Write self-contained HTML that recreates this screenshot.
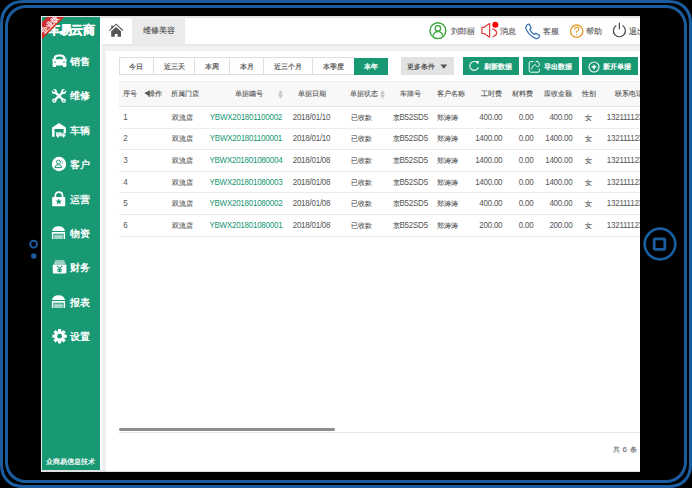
<!DOCTYPE html>
<html><head><meta charset="utf-8">
<style>
*{margin:0;padding:0;box-sizing:border-box;}
html,body{width:692px;height:488px;overflow:hidden;background:#000;font-family:"Liberation Sans",sans-serif;}
.a{position:absolute;}
#frame{position:absolute;left:0;top:0;}
#screen{position:absolute;left:41px;top:16px;width:599px;height:455.5px;background:#fff;overflow:hidden;}
#side{position:absolute;left:1px;top:1px;width:58.3px;height:452.6px;background:#189873;}
.mi{position:absolute;left:28px;color:#fff;font-size:10px;line-height:12px;font-weight:bold;white-space:nowrap;}
.t{position:absolute;white-space:nowrap;font-size:8px;line-height:10px;color:#555;letter-spacing:-0.25px;-webkit-text-stroke:0.1px currentColor;}
.c{font-size:7.3px;letter-spacing:0;-webkit-text-stroke:0.1px currentColor;}
.l{display:inline-block;transform:scaleY(1.16);-webkit-text-stroke:0px currentColor;}
</style></head><body>
<svg id="frame" width="692" height="488" viewBox="0 0 692 488">
  <path d="M23.5,1.5 H668.5 C682.14,1.5 690.5,9.86 690.5,23.5 V464.5 C690.5,478.14 682.14,486.5 668.5,486.5 H23.5 C9.86,486.5 1.5,478.14 1.5,464.5 V23.5 C1.5,9.86 9.86,1.5 23.5,1.5 Z" fill="none" stroke="#1b5c9e" stroke-width="3"/>
  <path d="M26.5,6.5 H665.5 C677.10,6.5 685.5,14.90 685.5,26.5 V461.5 C685.5,473.10 677.10,481.5 665.5,481.5 H26.5 C14.90,481.5 6.5,473.10 6.5,461.5 V26.5 C6.5,14.90 14.90,6.5 26.5,6.5 Z" fill="none" stroke="#1b5c9e" stroke-width="3"/>
  <circle cx="33.6" cy="244.2" r="3.4" fill="none" stroke="#1b5c9e" stroke-width="1.9"/>
  <circle cx="33.8" cy="256" r="2.7" fill="#1b5c9e"/>
  <circle cx="660" cy="244" r="15.3" fill="none" stroke="#1b5c9e" stroke-width="2.7"/>
  <rect x="654.2" y="238.8" width="10.6" height="10.6" rx="1" fill="none" stroke="#1b5c9e" stroke-width="2.8"/>
</svg>
<div id="screen">
<div class="a" style="left:0;top:0;width:599px;height:1.7px;background:#e2e2e2"></div>
<div class="a" style="left:0;top:0;width:1px;height:456px;background:#e6e6e6"></div>
<div class="a" style="left:0;top:453.6px;width:599px;height:2px;background:#e0e0e0"></div>
<div class="a" style="left:61px;top:28px;width:538px;height:426px;background:#f0f0f0"></div>
<div class="a" style="left:61px;top:28px;width:538px;height:1.6px;background:#e8e8e8"></div>
<div class="a" style="left:64.7px;top:34.6px;width:535px;height:420px;background:#fff"></div>
<div class="a" style="left:91px;top:1px;width:53px;height:27px;background:#ebebeb"></div>
<svg class="a" style="left:67px;top:7px" width="16" height="15" viewBox="0 0 16 15"><path d="M1.3,7.6 L8.1,1.2 L14.9,7.5" fill="none" stroke="#555" stroke-width="1.1"/><rect x="3.3" y="2.6" width="1.7" height="2.6" fill="#555"/><path d="M3.2,8.2 L8.1,3.9 L13,8.2 V13.8 H9.6 V11 H6.8 V13.8 H3.2 Z" fill="#555"/></svg>
<div class="t" style="left:101.80px;top:8.30px;color:#444;font-size:8.3px;line-height:12px;letter-spacing:0;">维修美容</div>
<svg class="a" style="left:387px;top:5px" width="20" height="20" viewBox="0 0 20 20"><circle cx="9.9" cy="9.7" r="7.9" fill="none" stroke="#3aa53a" stroke-width="1.4"/><circle cx="9.9" cy="7.4" r="2.7" fill="none" stroke="#3aa53a" stroke-width="1.3"/><path d="M5.2,14.6 Q5.8,10.6 9.9,10.6 Q14,10.6 14.6,14.6" fill="none" stroke="#3aa53a" stroke-width="1.3"/></svg>
<div class="t" style="left:410.00px;top:10.10px;color:#555;font-size:8px;line-height:12px;letter-spacing:0;">刘郎丽</div>
<svg class="a" style="left:438px;top:4px" width="20" height="20" viewBox="0 0 20 20"><path d="M2.9,7.3 H5.1 L10.6,3.6 V17.2 L5.1,13.5 H2.9 Z" fill="none" stroke="#e03a3a" stroke-width="1.2" stroke-linejoin="round"/><path d="M13.3,8.8 C19,10.4 19,15.2 13.6,16.8" fill="none" stroke="#e03a3a" stroke-width="1.3"/><circle cx="16.3" cy="4.8" r="3" fill="#f00"/></svg>
<div class="t" style="left:458.50px;top:10.10px;color:#555;font-size:8px;line-height:12px;letter-spacing:0;">消息</div>
<svg class="a" style="left:483px;top:6.6px" width="17" height="17" viewBox="0 0 17 17"><path d="M3.2,1.6 L5.2,1 L7.2,5 L5.8,6.4 Q7,9.6 10.4,11.6 L11.8,10.2 L15.6,12.4 L15,14.4 Q13.6,16 11.6,15.4 Q4.6,12.6 1.8,5.4 Q1.4,3 3.2,1.6 Z" fill="none" stroke="#2b6cb3" stroke-width="1.2" stroke-linejoin="round"/></svg>
<div class="t" style="left:501.70px;top:10.10px;color:#555;font-size:8px;line-height:12px;letter-spacing:0;">客服</div>
<svg class="a" style="left:526.5px;top:6.7px" width="17" height="17" viewBox="0 0 17 17"><circle cx="8.7" cy="8.2" r="6.2" fill="none" stroke="#e39b2d" stroke-width="1.3"/><path d="M6.6,6.4 Q6.6,4.4 8.7,4.4 Q10.8,4.4 10.8,6.3 Q10.8,7.6 8.7,8.6 V9.8" fill="none" stroke="#e39b2d" stroke-width="1.1"/><circle cx="8.7" cy="11.6" r="0.7" fill="#e39b2d"/></svg>
<div class="t" style="left:544.80px;top:10.10px;color:#555;font-size:8px;line-height:12px;letter-spacing:0;">帮助</div>
<svg class="a" style="left:570px;top:5.3px" width="17" height="17" viewBox="0 0 17 17"><path d="M5.3,4.6 A6,6 0 1 0 11.5,4.6" fill="none" stroke="#444" stroke-width="1.2"/><line x1="8.4" y1="1.8" x2="8.4" y2="8.2" stroke="#444" stroke-width="1.2"/></svg>
<div class="t" style="left:588.00px;top:10.10px;color:#555;font-size:8px;line-height:12px;letter-spacing:0;">退出</div>
<div class="a" style="left:77.5px;top:41px;width:35.5px;height:18px;border:1px solid #dedede;color:#555;font-size:7.3px;line-height:17.6px;text-align:center;-webkit-text-stroke:0.2px #555">今日</div>
<div class="a" style="left:112px;top:41px;width:42.3px;height:18px;border:1px solid #dedede;color:#555;font-size:7.3px;line-height:17.6px;text-align:center;-webkit-text-stroke:0.2px #555">近三天</div>
<div class="a" style="left:153.3px;top:41px;width:35.7px;height:18px;border:1px solid #dedede;color:#555;font-size:7.3px;line-height:17.6px;text-align:center;-webkit-text-stroke:0.2px #555">本周</div>
<div class="a" style="left:188px;top:41px;width:35.3px;height:18px;border:1px solid #dedede;color:#555;font-size:7.3px;line-height:17.6px;text-align:center;-webkit-text-stroke:0.2px #555">本月</div>
<div class="a" style="left:222.3px;top:41px;width:50.1px;height:18px;border:1px solid #dedede;color:#555;font-size:7.3px;line-height:17.6px;text-align:center;-webkit-text-stroke:0.2px #555">近三个月</div>
<div class="a" style="left:271.4px;top:41px;width:42.6px;height:18px;border:1px solid #dedede;color:#555;font-size:7.3px;line-height:17.6px;text-align:center;-webkit-text-stroke:0.2px #555">本季度</div>
<div class="a" style="left:313px;top:41.5px;width:34.0px;height:17.3px;background:#189873;color:#fff;font-size:7.3px;line-height:18.6px;text-align:center;-webkit-text-stroke:0.3px #fff">本年</div>
<div class="a" style="left:360px;top:41px;width:52.5px;height:17.5px;background:#e3e3e3"></div>
<div class="t" style="left:366.30px;top:45.80px;color:#444;font-size:7.4px;letter-spacing:0;-webkit-text-stroke:0.12px #444">更多条件</div>
<svg class="a" style="left:399px;top:48px" width="8" height="6" viewBox="0 0 8 6"><polygon points="0.4,0.6 7.2,0.6 3.8,4.8" fill="#555"/></svg>
<div class="a" style="left:422px;top:41.2px;width:56.4px;height:17.9px;background:#189873"></div>
<div class="t" style="left:443.00px;top:45.80px;color:#fff;font-size:7px;letter-spacing:0;-webkit-text-stroke:0.3px #fff">刷新数据</div>
<div class="a" style="left:481.8px;top:41.2px;width:56.7px;height:17.9px;background:#189873"></div>
<div class="t" style="left:502.80px;top:45.80px;color:#fff;font-size:7px;letter-spacing:0;-webkit-text-stroke:0.3px #fff">导出数据</div>
<div class="a" style="left:541.4px;top:41.2px;width:55.6px;height:17.9px;background:#189873"></div>
<div class="t" style="left:562.00px;top:45.80px;color:#fff;font-size:7px;letter-spacing:0;-webkit-text-stroke:0.3px #fff">新开单据</div>
<svg class="a" style="left:427px;top:44px" width="12" height="12" viewBox="0 0 12 12"><path d="M9.6,3.2 A4.4,4.4 0 1 0 10.4,7.2" fill="none" stroke="#fff" stroke-width="1.1"/><polygon points="7.6,1.2 10.8,1 10.4,4.4" fill="#fff"/></svg>
<svg class="a" style="left:486.2px;top:43px" width="14" height="15" viewBox="0 0 14 15"><path d="M6.4,2.6 H3.6 Q2.2,2.6 2.2,4 V11.8 Q2.2,13.2 3.6,13.2 H11 Q12.4,13.2 12.4,11.8 V9.8" fill="none" stroke="#fff" stroke-width="1"/><path d="M4.6,10.4 C5,7.6 6.6,6 8.8,5.6" fill="none" stroke="#fff" stroke-width="1"/><path d="M8.6,3.2 L10.2,2 L13,5.6 L10.4,8 L9.2,6.6" fill="none" stroke="#fff" stroke-width="1" stroke-linejoin="round"/></svg>
<svg class="a" style="left:546.8px;top:44.6px" width="12" height="12" viewBox="0 0 12 12"><circle cx="6" cy="6" r="5" fill="none" stroke="#fff" stroke-width="1.1"/><path d="M6,3.7 V8.3 M3.7,6 H8.3" stroke="#fff" stroke-width="1.4"/></svg>
<div class="a" style="left:77.5px;top:65px;width:522px;height:25.5px;background:#f8f8f8;border-top:1px solid #ececec;border-bottom:1px solid #e4e4e4"></div>
<div class="t" style="left:82.20px;top:72.50px;color:#555;"><span class="c">序号</span></div>
<div class="t" style="left:106.80px;top:72.50px;color:#555;"><span class="c">操作</span></div>
<div class="t" style="left:130.30px;top:72.50px;color:#555;"><span class="c">所属门店</span></div>
<div class="t" style="left:147.80px;top:72.50px;width:120px;text-align:center;color:#555;"><span class="c">单据编号</span></div>
<div class="t" style="left:210.50px;top:72.50px;width:120px;text-align:center;color:#555;"><span class="c">单据日期</span></div>
<div class="t" style="left:309.20px;top:72.50px;color:#555;"><span class="c">单据状态</span></div>
<div class="t" style="left:309.30px;top:72.50px;width:120px;text-align:center;color:#555;"><span class="c">车牌号</span></div>
<div class="t" style="left:395.80px;top:72.50px;color:#555;"><span class="c">客户名称</span></div>
<div class="t" style="left:341.30px;top:72.50px;width:120px;text-align:right;color:#555;"><span class="c">工时费</span></div>
<div class="t" style="left:372.40px;top:72.50px;width:120px;text-align:right;color:#555;"><span class="c">材料费</span></div>
<div class="t" style="left:411.40px;top:72.50px;width:120px;text-align:right;color:#555;"><span class="c">应收金额</span></div>
<div class="t" style="left:488.30px;top:72.50px;width:120px;text-align:center;color:#555;"><span class="c">性别</span></div>
<div class="t" style="left:574.30px;top:72.50px;color:#555;"><span class="c">联系电话</span></div>
<svg class="a" style="left:103.4px;top:74px" width="7" height="7" viewBox="0 0 7 7"><polygon points="0.3,3.1 5.6,0.5 5.6,6.4" fill="#555"/></svg>
<svg class="a" style="left:237.3px;top:73.7px" width="5" height="9" viewBox="0 0 5 9"><polygon points="2.5,0.2 4.8,4.2 0.2,4.2" fill="#c4c4c4"/><polygon points="2.5,8.8 4.8,4.8 0.2,4.8" fill="#c4c4c4"/></svg>
<svg class="a" style="left:338.9px;top:73.7px" width="5" height="9" viewBox="0 0 5 9"><polygon points="2.5,0.2 4.8,4.2 0.2,4.2" fill="#c4c4c4"/><polygon points="2.5,8.8 4.8,4.8 0.2,4.8" fill="#c4c4c4"/></svg>
<div class="a" style="left:77.5px;top:111.6px;width:522px;height:1px;background:#ececec"></div>
<div class="t" style="left:82.30px;top:96.70px;color:#555;"><span class="l">1</span></div>
<div class="t" style="left:131.00px;top:96.70px;color:#555;"><span class="c">双流店</span></div>
<div class="t" style="left:144.90px;top:96.70px;width:120px;text-align:center;color:#189873;"><span class="l">YBWX201801100002</span></div>
<div class="t" style="left:210.50px;top:96.70px;width:120px;text-align:center;color:#555;"><span class="l">2018/01/10</span></div>
<div class="t" style="left:310.00px;top:96.70px;color:#555;"><span class="c">已收款</span></div>
<div class="t" style="left:309.20px;top:96.70px;width:120px;text-align:center;color:#555;"><span class="c">京</span><span class="l">B52SD5</span></div>
<div class="t" style="left:396.00px;top:96.70px;color:#555;"><span class="c">郑涛涛</span></div>
<div class="t" style="left:341.30px;top:96.70px;width:120px;text-align:right;color:#555;"><span class="l">400.00</span></div>
<div class="t" style="left:372.40px;top:96.70px;width:120px;text-align:right;color:#555;"><span class="l">0.00</span></div>
<div class="t" style="left:411.40px;top:96.70px;width:120px;text-align:right;color:#555;"><span class="l">400.00</span></div>
<div class="t" style="left:487.90px;top:96.70px;width:120px;text-align:center;color:#555;"><span class="c">女</span></div>
<div class="t" style="left:565.80px;top:96.70px;color:#555;"><span class="l">13211112345</span></div>
<div class="a" style="left:77.5px;top:133.2px;width:522px;height:1px;background:#ececec"></div>
<div class="t" style="left:82.30px;top:118.30px;color:#555;"><span class="l">2</span></div>
<div class="t" style="left:131.00px;top:118.30px;color:#555;"><span class="c">双流店</span></div>
<div class="t" style="left:144.90px;top:118.30px;width:120px;text-align:center;color:#189873;"><span class="l">YBWX201801100001</span></div>
<div class="t" style="left:210.50px;top:118.30px;width:120px;text-align:center;color:#555;"><span class="l">2018/01/10</span></div>
<div class="t" style="left:310.00px;top:118.30px;color:#555;"><span class="c">已收款</span></div>
<div class="t" style="left:309.20px;top:118.30px;width:120px;text-align:center;color:#555;"><span class="c">京</span><span class="l">B52SD5</span></div>
<div class="t" style="left:396.00px;top:118.30px;color:#555;"><span class="c">郑涛涛</span></div>
<div class="t" style="left:341.30px;top:118.30px;width:120px;text-align:right;color:#555;"><span class="l">1400.00</span></div>
<div class="t" style="left:372.40px;top:118.30px;width:120px;text-align:right;color:#555;"><span class="l">0.00</span></div>
<div class="t" style="left:411.40px;top:118.30px;width:120px;text-align:right;color:#555;"><span class="l">1400.00</span></div>
<div class="t" style="left:487.90px;top:118.30px;width:120px;text-align:center;color:#555;"><span class="c">女</span></div>
<div class="t" style="left:565.80px;top:118.30px;color:#555;"><span class="l">13211112345</span></div>
<div class="a" style="left:77.5px;top:154.8px;width:522px;height:1px;background:#ececec"></div>
<div class="t" style="left:82.30px;top:139.90px;color:#555;"><span class="l">3</span></div>
<div class="t" style="left:131.00px;top:139.90px;color:#555;"><span class="c">双流店</span></div>
<div class="t" style="left:144.90px;top:139.90px;width:120px;text-align:center;color:#189873;"><span class="l">YBWX201801080004</span></div>
<div class="t" style="left:210.50px;top:139.90px;width:120px;text-align:center;color:#555;"><span class="l">2018/01/08</span></div>
<div class="t" style="left:310.00px;top:139.90px;color:#555;"><span class="c">已收款</span></div>
<div class="t" style="left:309.20px;top:139.90px;width:120px;text-align:center;color:#555;"><span class="c">京</span><span class="l">B52SD5</span></div>
<div class="t" style="left:396.00px;top:139.90px;color:#555;"><span class="c">郑涛涛</span></div>
<div class="t" style="left:341.30px;top:139.90px;width:120px;text-align:right;color:#555;"><span class="l">1400.00</span></div>
<div class="t" style="left:372.40px;top:139.90px;width:120px;text-align:right;color:#555;"><span class="l">0.00</span></div>
<div class="t" style="left:411.40px;top:139.90px;width:120px;text-align:right;color:#555;"><span class="l">1400.00</span></div>
<div class="t" style="left:487.90px;top:139.90px;width:120px;text-align:center;color:#555;"><span class="c">女</span></div>
<div class="t" style="left:565.80px;top:139.90px;color:#555;"><span class="l">13211112345</span></div>
<div class="a" style="left:77.5px;top:176.4px;width:522px;height:1px;background:#ececec"></div>
<div class="t" style="left:82.30px;top:161.50px;color:#555;"><span class="l">4</span></div>
<div class="t" style="left:131.00px;top:161.50px;color:#555;"><span class="c">双流店</span></div>
<div class="t" style="left:144.90px;top:161.50px;width:120px;text-align:center;color:#189873;"><span class="l">YBWX201801080003</span></div>
<div class="t" style="left:210.50px;top:161.50px;width:120px;text-align:center;color:#555;"><span class="l">2018/01/08</span></div>
<div class="t" style="left:310.00px;top:161.50px;color:#555;"><span class="c">已收款</span></div>
<div class="t" style="left:309.20px;top:161.50px;width:120px;text-align:center;color:#555;"><span class="c">京</span><span class="l">B52SD5</span></div>
<div class="t" style="left:396.00px;top:161.50px;color:#555;"><span class="c">郑涛涛</span></div>
<div class="t" style="left:341.30px;top:161.50px;width:120px;text-align:right;color:#555;"><span class="l">1400.00</span></div>
<div class="t" style="left:372.40px;top:161.50px;width:120px;text-align:right;color:#555;"><span class="l">0.00</span></div>
<div class="t" style="left:411.40px;top:161.50px;width:120px;text-align:right;color:#555;"><span class="l">1400.00</span></div>
<div class="t" style="left:487.90px;top:161.50px;width:120px;text-align:center;color:#555;"><span class="c">女</span></div>
<div class="t" style="left:565.80px;top:161.50px;color:#555;"><span class="l">13211112345</span></div>
<div class="a" style="left:77.5px;top:198.0px;width:522px;height:1px;background:#ececec"></div>
<div class="t" style="left:82.30px;top:183.10px;color:#555;"><span class="l">5</span></div>
<div class="t" style="left:131.00px;top:183.10px;color:#555;"><span class="c">双流店</span></div>
<div class="t" style="left:144.90px;top:183.10px;width:120px;text-align:center;color:#189873;"><span class="l">YBWX201801080002</span></div>
<div class="t" style="left:210.50px;top:183.10px;width:120px;text-align:center;color:#555;"><span class="l">2018/01/08</span></div>
<div class="t" style="left:310.00px;top:183.10px;color:#555;"><span class="c">已收款</span></div>
<div class="t" style="left:309.20px;top:183.10px;width:120px;text-align:center;color:#555;"><span class="c">京</span><span class="l">B52SD5</span></div>
<div class="t" style="left:396.00px;top:183.10px;color:#555;"><span class="c">郑涛涛</span></div>
<div class="t" style="left:341.30px;top:183.10px;width:120px;text-align:right;color:#555;"><span class="l">400.00</span></div>
<div class="t" style="left:372.40px;top:183.10px;width:120px;text-align:right;color:#555;"><span class="l">0.00</span></div>
<div class="t" style="left:411.40px;top:183.10px;width:120px;text-align:right;color:#555;"><span class="l">400.00</span></div>
<div class="t" style="left:487.90px;top:183.10px;width:120px;text-align:center;color:#555;"><span class="c">女</span></div>
<div class="t" style="left:565.80px;top:183.10px;color:#555;"><span class="l">13211112345</span></div>
<div class="a" style="left:77.5px;top:219.6px;width:522px;height:1px;background:#ececec"></div>
<div class="t" style="left:82.30px;top:204.70px;color:#555;"><span class="l">6</span></div>
<div class="t" style="left:131.00px;top:204.70px;color:#555;"><span class="c">双流店</span></div>
<div class="t" style="left:144.90px;top:204.70px;width:120px;text-align:center;color:#189873;"><span class="l">YBWX201801080001</span></div>
<div class="t" style="left:210.50px;top:204.70px;width:120px;text-align:center;color:#555;"><span class="l">2018/01/08</span></div>
<div class="t" style="left:310.00px;top:204.70px;color:#555;"><span class="c">已收款</span></div>
<div class="t" style="left:309.20px;top:204.70px;width:120px;text-align:center;color:#555;"><span class="c">京</span><span class="l">B52SD5</span></div>
<div class="t" style="left:396.00px;top:204.70px;color:#555;"><span class="c">郑涛涛</span></div>
<div class="t" style="left:341.30px;top:204.70px;width:120px;text-align:right;color:#555;"><span class="l">200.00</span></div>
<div class="t" style="left:372.40px;top:204.70px;width:120px;text-align:right;color:#555;"><span class="l">0.00</span></div>
<div class="t" style="left:411.40px;top:204.70px;width:120px;text-align:right;color:#555;"><span class="l">200.00</span></div>
<div class="t" style="left:487.90px;top:204.70px;width:120px;text-align:center;color:#555;"><span class="c">女</span></div>
<div class="t" style="left:565.80px;top:204.70px;color:#555;"><span class="l">13211112345</span></div>
<div class="a" style="left:78px;top:416px;width:521px;height:1px;background:#e6e6e6"></div>
<div class="a" style="left:78px;top:412.4px;width:216.3px;height:2.8px;border-radius:1.4px;background:#8c8c8c"></div>
<div class="t" style="left:571.70px;top:428.60px;color:#666;letter-spacing:0.6px"><span class="c">共</span> 6 <span class="c">条</span></div>
<div id="side">
<svg class="a" style="left:9px;top:36.9px" width="16" height="16" viewBox="0 0 16 16"><path d="M2,5.6 C2.8,1.2 4.5,0.4 8.5,0.4 C12.5,0.4 14.2,1.2 15,5.6 Z" fill="#fff"/>
<path d="M4.6,5.4 C5,3.2 5.8,2.6 8.5,2.6 C11.2,2.6 12,3.2 12.4,5.4 Z" fill="#189873"/>
<rect x="1.7" y="5.2" width="13.6" height="6.4" rx="1.4" fill="#fff"/>
<rect x="1" y="5.3" width="1.4" height="1.3" rx="0.4" fill="#fff"/><rect x="14.6" y="5.3" width="1.4" height="1.3" rx="0.4" fill="#fff"/>
<rect x="1.7" y="10" width="3.3" height="3.1" rx="0.5" fill="#fff"/><rect x="12" y="10" width="3.3" height="3.1" rx="0.5" fill="#fff"/>
<ellipse cx="4" cy="8.1" rx="1.1" ry="0.7" fill="#189873"/><ellipse cx="13" cy="8.1" rx="1.1" ry="0.7" fill="#189873"/></svg>
<div class="mi" style="top:39.0px">销售</div>
<svg class="a" style="left:9px;top:70.6px" width="16" height="16" viewBox="0 0 16 16"><g stroke="#fff" stroke-width="2.3"><line x1="3.4" y1="3.4" x2="12.6" y2="12.5"/><line x1="12.6" y1="3.4" x2="3.4" y2="12.5"/></g>
<circle cx="3.3" cy="3.4" r="2.5" fill="#fff"/><circle cx="12.7" cy="3.4" r="2.5" fill="#fff"/>
<rect x="-0.8" y="-1.8" width="1.6" height="3.6" fill="#189873" transform="translate(2.4,2.5) rotate(-45)"/>
<rect x="-0.8" y="-1.8" width="1.6" height="3.6" fill="#189873" transform="translate(13.6,2.5) rotate(45)"/>
<circle cx="3.3" cy="12.6" r="2.2" fill="#fff"/><circle cx="12.7" cy="12.6" r="2.2" fill="#fff"/>
<circle cx="3.2" cy="12.7" r="0.8" fill="#189873"/><circle cx="12.8" cy="12.7" r="0.8" fill="#189873"/></svg>
<div class="mi" style="top:73.4px">维修</div>
<svg class="a" style="left:9px;top:105.3px" width="16" height="16" viewBox="0 0 16 16"><path d="M1.1,5.5 L8,1 L14.9,5.5 V11.5 H12.5 V7 H3.6 V14.8 H1.1 Z" fill="#fff"/>
<rect x="3.6" y="7" width="8.9" height="1.6" fill="#189873"/>
<path d="M5,10.2 H10.5 V11.2 L12.6,11.2 L14.4,12.6 V14.2 H5 Z" fill="#fff" opacity="0.85"/>
<circle cx="7" cy="14.4" r="1" fill="#fff"/><circle cx="12.5" cy="14.4" r="1" fill="#fff"/></svg>
<div class="mi" style="top:107.8px">车辆</div>
<svg class="a" style="left:9px;top:139.0px" width="16" height="16" viewBox="0 0 16 16"><circle cx="8" cy="8" r="7.2" fill="#fff"/>
<circle cx="7.4" cy="6" r="1.9" fill="none" stroke="#189873" stroke-width="1"/>
<path d="M3.9,11.6 Q4.2,8.6 7.4,8.6 Q10.6,8.6 10.9,11.6 Z" fill="none" stroke="#189873" stroke-width="1"/>
<path d="M10.4,4.3 Q12,5.2 11.5,7.6" fill="none" stroke="#189873" stroke-width="0.8" opacity="0.6"/></svg>
<div class="mi" style="top:142.1px">客户</div>
<svg class="a" style="left:9px;top:174.2px" width="16" height="16" viewBox="0 0 16 16"><path d="M4.3,6 V4.8 Q4.3,1.2 7.9,1.2 Q11.5,1.2 11.5,4.8 V6" fill="none" stroke="#fff" stroke-width="1.7"/>
<rect x="1.2" y="6" width="13" height="9.2" rx="0.8" fill="#fff"/>
<polygon points="7.7,7.4 8.6,9.6 10.9,9.7 9.1,11.1 9.7,13.4 7.7,12.1 5.7,13.4 6.3,11.1 4.5,9.7 6.8,9.6" fill="#189873"/></svg>
<div class="mi" style="top:176.5px">运营</div>
<svg class="a" style="left:9px;top:208.2px" width="16" height="16" viewBox="0 0 16 16"><path d="M0.9,6 Q2,1.2 7.5,1.2 Q13,1.2 14.1,6 Z" fill="#fff"/>
<rect x="0.9" y="7" width="13.2" height="1.7" fill="#fff"/>
<rect x="0.9" y="8.4" width="1.5" height="5.6" fill="#fff"/><rect x="12.6" y="8.4" width="1.5" height="5.6" fill="#fff"/>
<g fill="#fff" opacity="0.5"><rect x="3.2" y="9.5" width="8.6" height="4.5"/></g>
<g fill="#fff" opacity="0.5"><rect x="3.2" y="11" width="8.6" height="0.8"/><rect x="3.2" y="12.8" width="8.6" height="0.8"/></g></svg>
<div class="mi" style="top:210.9px">物资</div>
<svg class="a" style="left:9px;top:242.3px" width="16" height="16" viewBox="0 0 16 16"><rect x="3.9" y="1" width="9.6" height="2.3" rx="0.5" fill="#fff" opacity="0.5"/>
<rect x="3.1" y="3" width="11.2" height="2.3" rx="0.5" fill="#fff" opacity="0.55"/>
<rect x="1.8" y="5.5" width="13.6" height="9.1" rx="0.8" fill="#fff"/>
<path d="M6,6.8 L8.6,9.6 L11.2,6.8 M8.6,9.6 V13.6 M6.4,10.5 H10.8 M6.4,12.1 H10.8" fill="none" stroke="#189873" stroke-width="1.15"/></svg>
<div class="mi" style="top:245.2px">财务</div>
<svg class="a" style="left:9px;top:276.6px" width="16" height="16" viewBox="0 0 16 16"><path d="M0.9,6 Q2,1.2 7.5,1.2 Q13,1.2 14.1,6 Z" fill="#fff"/>
<rect x="0.9" y="7" width="13.2" height="1.7" fill="#fff"/>
<rect x="0.9" y="8.4" width="1.5" height="5.6" fill="#fff"/><rect x="12.6" y="8.4" width="1.5" height="5.6" fill="#fff"/>
<g fill="#fff" opacity="0.5"><rect x="3.2" y="9.5" width="8.6" height="4.5"/></g>
<g fill="#fff" opacity="0.5"><rect x="3.2" y="11" width="8.6" height="0.8"/><rect x="3.2" y="12.8" width="8.6" height="0.8"/></g></svg>
<div class="mi" style="top:279.6px">报表</div>
<svg class="a" style="left:9px;top:311.3px" width="16" height="16" viewBox="0 0 16 16"><g transform="translate(8.6,8.2)"><g fill="#fff">
<rect x="-1.6" y="-7.2" width="3.2" height="14.4"/><rect x="-1.6" y="-7.2" width="3.2" height="14.4" transform="rotate(45)"/>
<rect x="-1.6" y="-7.2" width="3.2" height="14.4" transform="rotate(90)"/><rect x="-1.6" y="-7.2" width="3.2" height="14.4" transform="rotate(135)"/>
<circle r="5.3"/></g><circle r="2.4" fill="#189873"/></g></svg>
<div class="mi" style="top:314.0px">设置</div>
<div class="a" style="left:-1px;top:440.4px;width:58px;text-align:center;color:#fff;font-size:7px;line-height:10px;white-space:nowrap;-webkit-text-stroke:0.2px #fff">众商易信息技术</div>
<div class="a" style="left:6px;top:6px;color:#fff;font-size:12px;line-height:14px;font-weight:bold;letter-spacing:-0.4px;white-space:nowrap;-webkit-text-stroke:0.5px #fff">车易云商</div>
<svg class="a" style="left:0;top:0" width="26" height="26" viewBox="0 0 26 26">
<polygon points="0,5.2 5.2,0 22.3,0 0,22.3" fill="#cf2a2c"/>
<g transform="translate(7.3,7.3) rotate(-45)"><text x="0" y="2.6" text-anchor="middle" font-size="7.4" font-weight="bold" fill="#fff" font-family="Liberation Sans">企业版</text></g>
</svg>
</div>
</div>
</body></html>
